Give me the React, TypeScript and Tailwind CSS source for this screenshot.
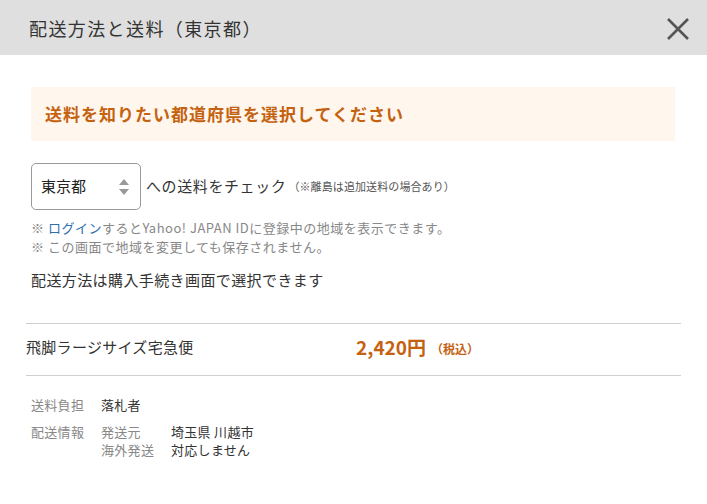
export default function App() {
  return (
    <div className="w-[707px] h-[504px] bg-white overflow-hidden text-[#333] font-['Noto_Sans_CJK_JP',sans-serif]">
      {/* Header */}
      <div className="h-[55px] bg-[#dfdfdf] flex items-center justify-between pl-[29px] pr-[16px]">
        <h1 className="text-[18px] leading-none text-[#333] tracking-[1.4px]">配送方法と送料（東京都）</h1>
        <svg width="26" height="26" viewBox="0 0 26 26" className="mt-[2px]">
          <path d="M3 3 L23 23 M23 3 L3 23" stroke="#555" strokeWidth="2.6" />
        </svg>
      </div>

      <div className="pl-[31px] pr-[32px] pt-[32px]">
        {/* Notice */}
        <div className="h-[54px] bg-[#fff6ee] flex items-center px-[14px]">
          <p className="text-[17px] font-bold text-[#c5620f] tracking-[1px]">送料を知りたい都道府県を選択してください</p>
        </div>

        {/* Select */}
        <div className="flex items-center mt-[22px]">
          <div className="w-[110px] h-[47px] border border-[#999] rounded-[5px] flex items-center justify-between pl-[9px] pr-[10px]">
            <span className="text-[15px] text-[#222]">東京都</span>
            <svg width="12" height="18" viewBox="0 0 12 18">
              <path d="M6 1 L11 7 L1 7 Z" fill="#999" />
              <path d="M6 17 L11 11 L1 11 Z" fill="#999" />
            </svg>
          </div>
          <span className="ml-[5px] text-[15px] text-[#333] tracking-[0.6px]">への送料をチェック</span>
          <span className="ml-[2px] text-[11px] text-[#555] tracking-[0.1px]">（※離島は追加送料の場合あり）</span>
        </div>

        <div className="mt-[8px] text-[13px] leading-[19px] text-[#888] tracking-[0.5px]">
          <p>
            ※ <span className="text-[#2f6fb0]">ログイン</span>するとYahoo! JAPAN IDに登録中の地域を表示できます。
          </p>
          <p>※ この画面で地域を変更しても保存されません。</p>
        </div>

        <p className="mt-[13px] text-[15px] text-[#333] tracking-[0.4px]">配送方法は購入手続き画面で選択できます</p>
      </div>

      {/* Shipping row */}
      <div className="mx-[26px] mt-[31px] border-t border-b border-[#cfcfcf] h-[53px] flex items-center">
        <span className="w-[330px] text-[15px] text-[#333] tracking-[0.3px] -mt-[3px]">飛脚ラージサイズ宅急便</span>
        <span className="text-[19px] font-bold text-[#c5620f] -mt-[3px]">2,420円</span>
        <span className="ml-[5px] text-[12px] font-bold text-[#c5620f] -mt-[1px]">（税込）</span>
      </div>

      {/* Details */}
      <div className="pl-[31px] mt-[20px] text-[13px] leading-[18px] tracking-[0.3px]">
        <div className="flex">
          <span className="w-[70px] text-[#888]">送料負担</span>
          <span className="text-[#333]">落札者</span>
        </div>
        <div className="flex mt-[9px]">
          <span className="w-[70px] text-[#888]">配送情報</span>
          <div className="grid grid-cols-[70px_auto]">
            <span className="text-[#888]">発送元</span>
            <span className="text-[#333]">埼玉県 川越市</span>
            <span className="text-[#888]">海外発送</span>
            <span className="text-[#333]">対応しません</span>
          </div>
        </div>
      </div>
    </div>
  );
}
